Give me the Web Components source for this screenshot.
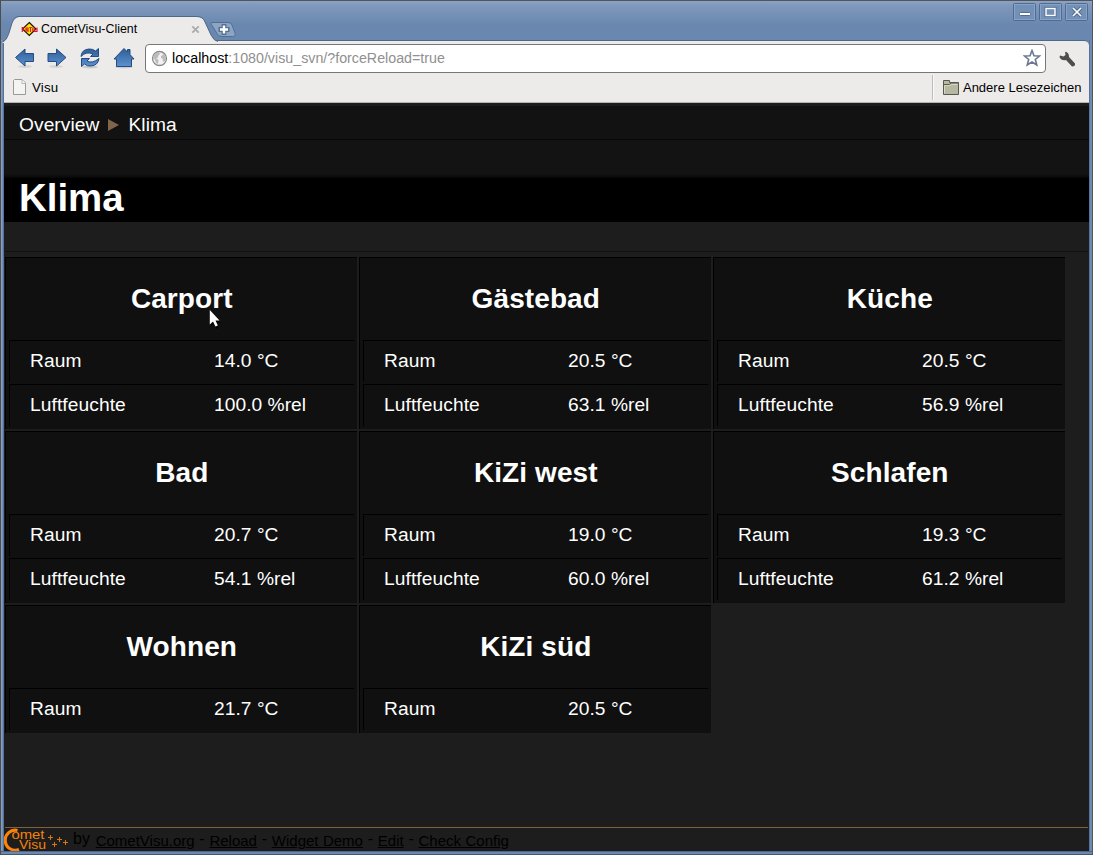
<!DOCTYPE html>
<html lang="de">
<head>
<meta charset="utf-8">
<title>CometVisu-Client</title>
<style>
html,body{margin:0;height:100%;overflow:hidden;background:#6986ad;font-family:"Liberation Sans",Arial,sans-serif}
</style>
</head>
<body>
<browser-window>
  <title-bar slot="title"></title-bar>
  <nav-bar slot="chrome"></nav-bar>
  <bookmark-bar slot="chrome"></bookmark-bar>
  <visu-page></visu-page>
</browser-window>
<script>
const define = (name, html, init) => customElements.define(name, class extends HTMLElement {
  constructor() {
    super();
    const root = this.attachShadow({mode: 'open'});
    const t = document.createElement('template');
    t.innerHTML = html;
    root.append(t.content.cloneNode(true));
    this.init = init;
  }
  connectedCallback() { if (this.init && !this.ready) { this.ready = true; this.init(this.shadowRoot); } }
});

define('browser-window', `
<style>
:host{display:flex;flex-direction:column;width:1093px;height:855px;box-sizing:border-box;
  border-top:1px solid #555;border-left:1px solid #4d4d4d;border-right:1px solid #555;
  background:linear-gradient(#8ba3c5,#8099bd 4px,#6987af 24px,#6987af 100%)}
.inner{flex:1;min-height:0;display:flex;flex-direction:column;margin:0 3px 4px 3px;position:relative}
.chrome{background:#edebea;border-radius:0 5px 0 0;border-top:1px solid #4e6889;box-sizing:border-box;height:63px;border-bottom:1px solid #b4b4b4}
.foot{position:absolute;left:-3px;right:-3px;bottom:-4px;height:4px;background:linear-gradient(#4a668c 0 1px,#6a89b2 1px 3px,#47566b 3px)}
.side{position:absolute;top:0;bottom:0;width:3px}
.l{left:-3px;background:linear-gradient(90deg,#8ba4c6,#6c8ab2 60%,#45618a)}
.r{right:-3px;background:linear-gradient(90deg,#48638a,#6c8ab2 40%,#6c8ab2)}
</style>
<slot name="title"></slot>
<div class="inner"><div class="chrome"><slot name="chrome"></slot></div><slot></slot>
<div class="side l"></div><div class="side r"></div><div class="foot"></div></div>`);

define('title-bar', `
<style>
:host{display:flex;height:39px;position:relative;z-index:1;justify-content:space-between}
.tab{display:flex;align-items:center;height:25px;margin:15px 0 0 20px;width:190px;position:relative}
.shape{position:absolute;left:-20px;top:-1px}
.fav,.tab span{position:relative}
.fav{left:-.5px}
.tab span{font-size:12.4px;color:#000;margin-left:3px;line-height:28px;white-space:nowrap}
.x{position:absolute;left:170px;top:9px}
.btns{display:flex;gap:3px;margin:2px 4px 0 0}
.btns svg{display:block}
</style>
<div class="tab">
<svg class="shape" width="240" height="28" viewBox="0 0 240 28">
<path d="M0 28V27.500C5 26 6 23 8 18L11 8Q13.500 2 18 2H196Q202 2 204 7L210 20Q213 26 217 26.500H222V28Z" fill="#edebea"/>
<path d="M0 27.500C5 26 6 23 8 18L11 8Q13.500 1.500 18 1.500H196Q202 1.500 204 7L210 20Q213 26 217 26.500" fill="none" stroke="#4e6889"/>
<path d="M210.500 7.500H227Q230 7.500 231 10L234 18Q235 21.500 231.500 21.500H221Q217.500 21.500 216 18.500L210.500 9.500Q209.500 7.500 210.500 7.500Z" fill="#8da5c4" stroke="#536e94"/>
<path d="M223 9V20M217.500 14.500H228.500" stroke="#56708f" stroke-width="4.800"/><path d="M223 10.500V18.500M219 14.500H227" stroke="#fff" stroke-width="2.400"/>
</svg>
<svg class="fav" width="17" height="16" viewBox="0 0 17 16"><path d="M8.300 1.500L15 8 8.300 14.500 1.500 8Z" fill="#ffe800" stroke="#1c1400" stroke-width="1.200"/><path d="M1.300 11V6.500H3.500M1.300 8.500H3.300M5 11V7H7V11M5 9H7M9.500 6V11M8.300 6.500H10.800M11.800 6.500V10.500M13.500 6.500V10.500H16V6.500" fill="none" stroke="#dc1630" stroke-width="1.200"/></svg>
<span>CometVisu-Client</span>
<svg class="x" width="9" height="9" viewBox="0 0 9 9"><path d="M1.300 1.300L7.700 7.700M7.700 1.300L1.300 7.700" stroke="#aaa" stroke-width="1.700"/></svg>
</div>
<div class="btns">
<svg width="23" height="18"><rect x=".5" y=".5" width="22" height="17" rx="1" fill="#7390b7" stroke="#506b91"/><rect x="1.500" y="1.500" width="20" height="15" fill="none" stroke="#89a3c6"/><rect x="6.500" y="9.500" width="11" height="3" rx="1" fill="#fff" stroke="#526c91"/></svg>
<svg width="23" height="18"><rect x=".5" y=".5" width="22" height="17" rx="1" fill="#7390b7" stroke="#506b91"/><rect x="1.500" y="1.500" width="20" height="15" fill="none" stroke="#89a3c6"/><rect x="7" y="5.500" width="9" height="7" fill="none" stroke="#506b91" stroke-width="3"/><rect x="7" y="5.500" width="9" height="7" fill="#7390b7" stroke="#fff" stroke-width="1.400"/></svg>
<svg width="23" height="18"><rect x=".5" y=".5" width="22" height="17" rx="1" fill="#7390b7" stroke="#506b91"/><rect x="1.500" y="1.500" width="20" height="15" fill="none" stroke="#89a3c6"/><path d="M8 5L16 13M16 5L8 13" stroke="#506b91" stroke-width="3.500"/><path d="M8 5L16 13M16 5L8 13" stroke="#fff" stroke-width="1.600"/></svg>
</div>`);

define('nav-bar', `
<style>
:host{display:flex;height:34px;align-items:center;padding-left:10px}
svg{display:block;flex:none}
.nav{display:flex;gap:10px;margin-right:9px}
.url{display:flex;align-items:center;width:901px;height:29px;box-sizing:border-box;border:1px solid #777;border-radius:4px;background:#fff;padding:0 4px 1px 5px;margin-top:1px}
.url p{flex:1;margin:0 0 0 4px;font-size:14.25px;color:#909090;white-space:nowrap}
.url b{font-weight:400;color:#000}
.w{margin:1px 0 0 12px}
</style>
<div class="nav">
<svg width="22" height="24"><defs><linearGradient id="g" x2="0" y2="1"><stop stop-color="#2f5e98"/><stop offset="1" stop-color="#5b91cf"/></linearGradient></defs><ellipse cx="11" cy="20.500" rx="7" ry="1.500" fill="#d6d4d3"/><path d="M1.500 11.500L11 3V7.500H19.500V15.500H11V20Z" fill="url(#g)" stroke="#234d82"/></svg>
<svg width="22" height="24"><ellipse cx="10" cy="20.500" rx="7" ry="1.500" fill="#d6d4d3"/><path d="M20 11.500L10.500 3V7.500H2V15.500H10.500V20Z" fill="url(#g)" stroke="#234d82"/></svg>
<svg width="24" height="24"><ellipse cx="12" cy="21" rx="8" ry="1.500" fill="#ccc"/><path d="M3 10.500Q3.500 3.500 11 3Q15 2.800 17.500 5L20.500 2.500V10.500H12.500L15 8Q8 5 3 10.500ZM21 12.500Q20 19.500 13 20Q9 20.500 6.500 18L3.500 20.500V12.500H11.500L9 15Q14 18 21 12.500Z" fill="url(#g)" stroke="#234d82"/></svg>
<svg width="24" height="24"><ellipse cx="12" cy="21" rx="9" ry="1.500" fill="#ccc"/><path d="M2 13L12 2.500 15.500 6V3.500H18V8.500L22 13H19.500V20.500H4.500V13Z" fill="url(#g)" stroke="#234d82"/></svg>
</div>
<div class="url">
<svg width="17" height="17"><circle cx="8.500" cy="8.500" r="7" fill="#f2f2f2" stroke="#8a8a8a" stroke-width="1.300"/><path d="M3 4.500Q5 2 8 2L9 4 7 6 7.500 7.500 5 8 7.500 10 7 14 5 13 4 10 2 8ZM11 3L14 5.500 15 9 13 12 11.500 11 12 9 10 8 10 6 12 5Z" fill="#bbb"/></svg>
<p><b>localhost</b>:1080/visu_svn/?forceReload=true</p>
<svg width="18" height="18"><path d="M9 1.500L11 6.700 16.500 7 12.300 10.500 13.800 16 9 13 4.200 16 5.700 10.500 1.500 7 7 6.700Z" fill="#fff" stroke="#6b7690" stroke-width="1.600"/></svg>
</div>
<svg class="w" width="18" height="18"><path d="M2 5.500L5.500 6.500 7.500 5 7 1.800Q11 2 11 7L17 13.500Q17.500 16.500 14 16.500L8 10Q3.500 11 1.500 7Z" fill="#4d4d4d" /></svg>`);

define('bookmark-bar', `
<style>
:host{display:flex;height:27px;align-items:center;font-size:13.3px;color:#000;padding:0 7.500px 0 9px}
svg{display:block;flex:none}
.v{margin:0 0 2px 6px;flex:1;letter-spacing:.15px}.o{font-size:13px;margin:0 0 2px 4px;white-space:nowrap}
.s{width:1px;height:25px;background:#bcbcbc;border-right:1px solid #f8f8f8;margin-right:9px;margin-top:-2px}
.p{margin-top:-2px}.f{margin-top:-1px}
</style>
<svg class="p" width="13" height="17"><path d="M1.500 .5H9L12.500 4V15.500H.5V1.500Z" fill="#f4f4f2" stroke="#999"/><path d="M9 1V4.500H12.500" fill="#fff" stroke="#b5b5b5"/></svg>
<span class="v">Visu</span><i class="s"></i>
<svg class="f" width="16" height="17"><path d="M.5 14.500V.5H6.500V2.500H15.500V14.500Z" fill="#b8b8a0" stroke="#58584f"/><path d="M1 4.500H6.500L8 3H15" fill="none" stroke="#58584f"/><path d="M1.500 13.500V5.500H7L8.500 4.500H14.500" fill="none" stroke="#d7d7c8"/></svg>
<span class="o">Andere Lesezeichen</span>`);

define('room-value', `
<style>
:host{display:flex;height:42px;box-sizing:border-box;margin:0 3px 2px 3px;border-top:1px solid #000;border-left:1px solid #000;line-height:39px;padding-left:20px;color:#fff;font-size:19.2px;letter-spacing:.04px;white-space:nowrap}
.n{width:184px;letter-spacing:.08px}
</style><span class="n"><slot></slot></span><slot name="v"></slot>`);

define('room-card', `
<style>
:host{display:block;box-sizing:border-box;border-top:1px solid #000;border-left:1px solid #000;background:#101010;align-self:start;padding-bottom:1px}
h2{margin:0;height:82px;line-height:82px;text-align:center;color:#fff;font-size:28px;font-weight:700;letter-spacing:.1px;padding-left:.6px}
</style><h2></h2><slot></slot>`, function (r) { r.querySelector('h2').textContent = this.getAttribute('name'); });

define('visu-footer', `
<style>
:host{display:flex;height:23px;border-top:1px solid #7d613f;margin:0 1px 0 1px;color:#000;font-size:16px;white-space:nowrap}
svg{display:block;flex:none;margin-left:-1px}
p{margin:0 0 0 3px;line-height:21px;word-spacing:.3px}
a{font-size:15px;text-decoration:underline;position:relative;top:2px}
.by{margin-right:1px}
svg text{font-family:"Liberation Sans",Arial,sans-serif}
</style>
<svg width="66" height="24"><path d="M13.500 2.500A10 10 0 1 0 15 21.500" fill="none" stroke="#ff8208" stroke-width="3.200"/>
<g fill="#f58209" font-size="12"><text x="7.500" y="11" textLength="33" lengthAdjust="spacingAndGlyphs">omet</text><text x="15" y="21.300" textLength="27" lengthAdjust="spacingAndGlyphs">Visu</text></g>
<path d="M44 9.500H49M46.500 7V12M53 11.500H58M55.500 9V14M48 16.500H53M50.500 14V19M59 14.500H64M61.500 12V17" stroke="#d97612"/></svg>
<p><span class="by">by</span> <a>CometVisu.org</a> - <a>Reload</a> - <a>Widget Demo</a> - <a>Edit</a> - <a>Check Config</a></p>`);

define('visu-page', `
<style>
:host{display:flex;flex-direction:column;flex:1;min-height:0;background:#1d1d1d;width:1085px;position:relative}
.path{height:34px;margin-top:3px;box-sizing:border-box;border-bottom:1px solid #070707;background:#121212;color:#fff;font-size:19.2px;letter-spacing:.06px;display:flex;align-items:center;padding:4px 0 0 15px}
.path svg{margin:1px 9px 0 9px}
.gap{height:38px;background:linear-gradient(#131313 34px,#000 40px)}
h1{margin:0;height:44px;background:#000;color:#fff;font-size:38.4px;line-height:40px;padding-left:15px}
.line{height:29px;border-bottom:1px solid #111;margin:0 1px}
.grid{display:grid;grid-template-columns:repeat(3,352px);gap:2px;margin:5px 0 0 1px;flex:1;align-content:start}
.cur{position:absolute;left:205px;top:206px}
</style>
<div class="path"><span>Overview</span><svg width="11" height="12"><path d="M0 0L11 6 0 12Z" fill="#80644c"/></svg><span>Klima</span></div>
<div class="gap"></div><h1>Klima</h1><div class="line"></div><div class="grid"></div>
<visu-footer></visu-footer>
<svg class="cur" width="13" height="21"><path d="M2 3V18L5 15 7.500 20 10 19 8 14H12Z" fill="#000" opacity=".6"/><path d="M.8 1V15.500L4 12.500 6.500 17.500 8.800 16.500 6.500 11.500H10.500Z" fill="#fff"/></svg>`, function (r) {
  const rooms = [['Carport', '14.0', '100.0'], ['Gästebad', '20.5', '63.1'], ['Küche', '20.5', '56.9'],
    ['Bad', '20.7', '54.1'], ['KiZi west', '19.0', '60.0'], ['Schlafen', '19.3', '61.2'],
    ['Wohnen', '21.7'], ['KiZi süd', '20.5']];
  r.querySelector('.grid').innerHTML = rooms.map(([n, t, h]) => `<room-card name="${n}"><room-value>Raum<span slot="v">${t} °C</span></room-value>` +
    (h ? `<room-value>Luftfeuchte<span slot="v">${h} %rel</span></room-value>` : '') + '</room-card>').join('');
});
</script>
</body>
</html>
